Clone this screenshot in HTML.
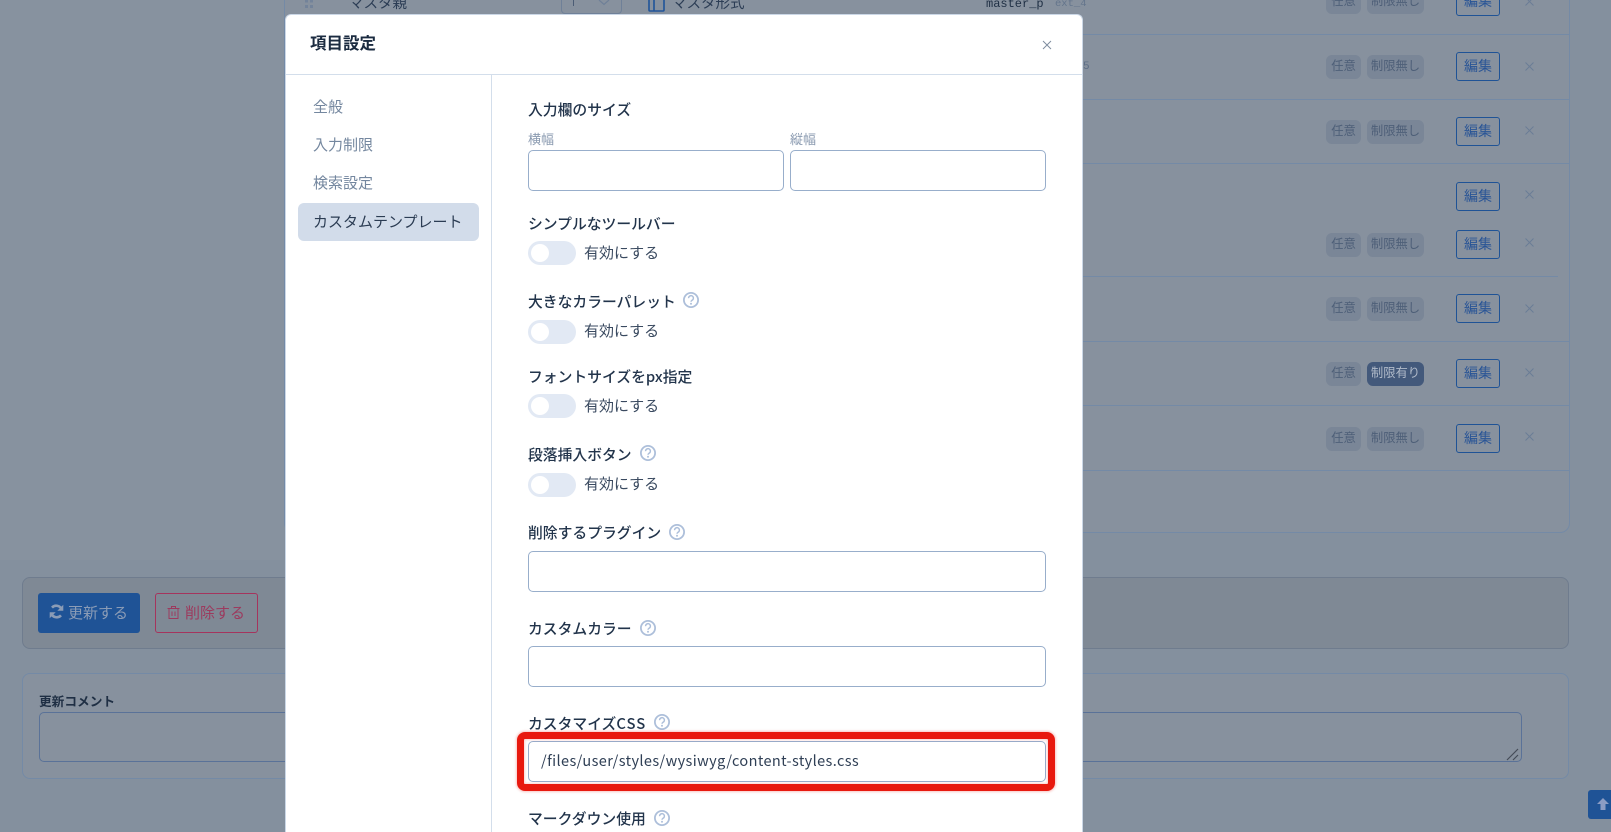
<!DOCTYPE html>
<html lang="ja">
<head>
<meta charset="utf-8">
<title>項目設定</title>
<style>
html,body{margin:0;padding:0;width:1611px;height:832px;overflow:hidden;background:#84909e;}
body{position:relative;font-family:"Liberation Sans","Noto Sans CJK JP",sans-serif;color:#1f2f44;}
*{box-sizing:border-box;}
.a{position:absolute;}
.t{position:absolute;white-space:nowrap;line-height:20px;height:20px;font-family:"Noto Sans CJK JP","Liberation Sans",sans-serif;}
.badge{position:absolute;height:24px;background:#7a8697;border-radius:6px;color:#4e5f78;font-size:12.3px;line-height:21px;text-align:center;font-family:"Noto Sans CJK JP",sans-serif;}
.b1{left:1326px;width:35px;}
.b2{left:1367px;width:57px;}
.b3{left:1367px;width:57px;background:#43597b;color:#b0bac9;}
.edit{position:absolute;left:1456px;width:44px;height:29px;border:1px solid #1f5396;border-radius:3px;color:#2a5596;font-size:14px;line-height:26px;text-align:center;font-family:"Noto Sans CJK JP",sans-serif;}
.x{position:absolute;left:1525px;width:9px;height:9px;}
.line{position:absolute;left:284px;width:1285px;height:1px;background:#748aa6;}
.lab{font-size:14.8px;font-weight:500;color:#22344b;left:528px;}
.nav{font-size:15px;left:313px;color:#74879f;}
.sw{position:absolute;left:528px;width:48px;height:24px;border-radius:12px;background:#e2e9f4;}
.sw:after{content:"";position:absolute;left:3px;top:3px;width:18px;height:18px;border-radius:50%;background:#fff;}
.swt{left:584px;font-size:15px;color:#3a4a60;}
.inp{position:absolute;background:#fff;border:1px solid #98aecb;border-radius:5px;height:41px;}
.help{position:absolute;width:16px;height:16px;}
</style>
</head>
<body>
<!-- background card -->
<div class="a" style="left:284px;top:-20px;width:1286px;height:553px;background:#87919e;border:1px solid #748aa6;border-radius:10px;"></div>
<div class="a" style="left:0;top:0;width:284px;height:560px;background:#87929f;"></div>

<div class="line" style="top:34px"></div>
<div class="line" style="top:99px"></div>
<div class="line" style="top:163px"></div>
<div class="line" style="top:276px;width:1274px"></div>
<div class="line" style="top:341px"></div>
<div class="line" style="top:405px"></div>
<div class="line" style="top:470px"></div>

<!-- row 1 content peeking above modal -->
<svg class="a" style="left:305px;top:0" width="9" height="9"><g fill="#73839a"><rect x="0" y="0" width="3" height="2.5"/><rect x="5" y="0" width="3" height="2.5"/><rect x="0" y="5" width="3" height="3"/><rect x="5" y="5" width="3" height="3"/></g></svg>
<div class="t" style="left:349px;top:-7px;font-size:14.5px;color:#2c3d55">マスタ親</div>
<div class="a" style="left:561px;top:-15px;width:61px;height:29px;border:1px solid #6f8098;border-radius:4px"></div>
<div class="a" style="left:573px;top:0;width:1px;height:6px;background:#4b5c75"></div>
<svg class="a" style="left:598px;top:0" width="12" height="6"><path d="M1 0L6 4.5L11 0" fill="none" stroke="#6f8098" stroke-width="1.2"/></svg>
<svg class="a" style="left:648px;top:0" width="17" height="12"><path d="M1 0V10a1 1 0 0 0 1 1H15a1 1 0 0 0 1-1V0M6 0V11" fill="none" stroke="#20549a" stroke-width="1.6"/></svg>
<div class="t" style="left:672px;top:-7px;font-size:14.5px;color:#2c3d55">マスタ形式</div>
<div class="t" style="left:986px;top:-6px;font-family:'Liberation Mono',monospace;font-size:12px;color:#1f2f44">master_p</div>
<div class="t" style="left:1055px;top:-6px;font-family:'Liberation Mono',monospace;font-size:10.5px;color:#64758c">ext_4</div>
<div class="t" style="left:1083px;top:57px;font-family:'Liberation Mono',monospace;font-size:11px;color:#5d6e86">5</div>

<!-- rows -->
<div class="badge b1" style="top:-10px">任意</div><div class="badge b2" style="top:-10px">制限無し</div><div class="edit" style="top:-13px">編集</div>
<svg class="x" style="top:-3px" viewBox="0 0 9 9"><path d="M.5.5l8 8M8.5.5l-8 8" stroke="#6b7d96" stroke-width="1"/></svg>

<div class="badge b1" style="top:55px">任意</div><div class="badge b2" style="top:55px">制限無し</div><div class="edit" style="top:52px">編集</div>
<svg class="x" style="top:62px" viewBox="0 0 9 9"><path d="M.5.5l8 8M8.5.5l-8 8" stroke="#6b7d96" stroke-width="1"/></svg>

<div class="badge b1" style="top:120px">任意</div><div class="badge b2" style="top:120px">制限無し</div><div class="edit" style="top:117px">編集</div>
<svg class="x" style="top:126px" viewBox="0 0 9 9"><path d="M.5.5l8 8M8.5.5l-8 8" stroke="#6b7d96" stroke-width="1"/></svg>

<div class="edit" style="top:182px">編集</div>
<svg class="x" style="top:190px" viewBox="0 0 9 9"><path d="M.5.5l8 8M8.5.5l-8 8" stroke="#6b7d96" stroke-width="1"/></svg>

<div class="badge b1" style="top:233px">任意</div><div class="badge b2" style="top:233px">制限無し</div><div class="edit" style="top:230px">編集</div>
<svg class="x" style="top:238px" viewBox="0 0 9 9"><path d="M.5.5l8 8M8.5.5l-8 8" stroke="#6b7d96" stroke-width="1"/></svg>

<div class="badge b1" style="top:297px">任意</div><div class="badge b2" style="top:297px">制限無し</div><div class="edit" style="top:294px">編集</div>
<svg class="x" style="top:304px" viewBox="0 0 9 9"><path d="M.5.5l8 8M8.5.5l-8 8" stroke="#6b7d96" stroke-width="1"/></svg>

<div class="badge b1" style="top:362px">任意</div><div class="badge b3" style="top:362px">制限有り</div><div class="edit" style="top:359px">編集</div>
<svg class="x" style="top:368px" viewBox="0 0 9 9"><path d="M.5.5l8 8M8.5.5l-8 8" stroke="#6b7d96" stroke-width="1"/></svg>

<div class="badge b1" style="top:427px">任意</div><div class="badge b2" style="top:427px">制限無し</div><div class="edit" style="top:424px">編集</div>
<svg class="x" style="top:432px" viewBox="0 0 9 9"><path d="M.5.5l8 8M8.5.5l-8 8" stroke="#6b7d96" stroke-width="1"/></svg>

<!-- action panel -->
<div class="a" style="left:22px;top:577px;width:1547px;height:72px;background:#7f8995;border:1px solid #6f7c8e;border-radius:8px;"></div>
<div class="a" style="left:38px;top:593px;width:102px;height:40px;background:#1f5396;border-radius:3px;"></div>
<svg class="a" style="left:49px;top:604px" width="15" height="15" viewBox="0 0 15 15"><path d="M12.8 5.800A5.800 5.800 0 0 0 3 3.600M2.200 9.200A5.800 5.800 0 0 0 12 11.400" fill="none" stroke="#8b9cb6" stroke-width="2.600"/><path d="M14.300 .8v6H8.300zM.7 14.200V8.200H6.700z" fill="#8b9cb6"/></svg>
<div class="t" style="left:68px;top:603px;font-size:15px;color:#8b9cb6">更新する</div>
<div class="a" style="left:155px;top:593px;width:103px;height:40px;border:1px solid #a5345d;border-radius:3px;"></div>
<svg class="a" style="left:167px;top:605px" width="13" height="15" viewBox="0 0 13 15"><path d="M.5 3.500H12.500M4.500 3.500V1.500H8.500V3.500M2 3.500V13.500H11V3.500M5 6.500V11M8 6.500V11" fill="none" stroke="#9c3a5e" stroke-width="1"/></svg>
<div class="t" style="left:185px;top:603px;font-size:15px;color:#9c3a5e">削除する</div>

<!-- comment panel -->
<div class="a" style="left:22px;top:673px;width:1547px;height:106px;background:#87919e;border:1px solid #748aa6;border-radius:8px;"></div>
<div class="t" style="left:39px;top:691px;font-size:12.7px;font-weight:700;color:#1f2f44">更新コメント</div>
<div class="a" style="left:39px;top:712px;width:1483px;height:50px;border:1px solid #5a7298;border-radius:5px;"></div>
<svg class="a" style="left:1506px;top:747px" width="14" height="14"><path d="M1 13L12 2M7 13L12 8" stroke="#444c58" stroke-width="1.2" fill="none"/></svg>

<!-- scroll top -->
<div class="a" style="left:1588px;top:790px;width:30px;height:29px;background:#1f5396;border-radius:3px;"></div>
<svg class="a" style="left:1596px;top:797px" width="14" height="14" viewBox="0 0 14 14"><path d="M7 1L13 7H9.500V13H4.500V7H1z" fill="#8b9cc4"/></svg>

<!-- modal -->
<div class="a" style="left:285px;top:14px;width:798px;height:830px;background:#fff;border:1px solid #cbd7e6;border-bottom:0;border-radius:6px 6px 0 0;"></div>
<div class="a" style="left:286px;top:74px;width:796px;height:1px;background:#d3deeb"></div>
<div class="a" style="left:491px;top:75px;width:1px;height:757px;background:#d3deeb"></div>
<div class="t" style="left:310px;top:32px;font-size:16.5px;font-weight:700;color:#1b2b40">項目設定</div>
<svg class="a" style="left:1042px;top:40px" width="10" height="10" viewBox="0 0 10 10"><path d="M1 1l8 8M9 1l-8 8" stroke="#7f8da0" stroke-width="1"/></svg>

<div class="a" style="left:298px;top:203px;width:181px;height:38px;background:#d2dcea;border-radius:6px"></div>
<div class="t nav" style="top:97px">全般</div>
<div class="t nav" style="top:135px">入力制限</div>
<div class="t nav" style="top:173px">検索設定</div>
<div class="t nav" style="top:212px;color:#2b3c53">カスタムテンプレート</div>

<div class="t lab" style="top:100px">入力欄のサイズ</div>
<div class="t" style="left:528px;top:129px;font-size:13px;color:#8a9ab0">横幅</div>
<div class="t" style="left:790px;top:129px;font-size:13px;color:#8a9ab0">縦幅</div>
<div class="inp" style="left:528px;top:150px;width:256px"></div>
<div class="inp" style="left:790px;top:150px;width:256px"></div>

<div class="t lab" style="top:214px">シンプルなツールバー</div>
<div class="sw" style="top:241px"></div>
<div class="t swt" style="top:243px">有効にする</div>

<div class="t lab" style="top:292px">大きなカラーパレット</div>
<svg class="help" style="left:683px;top:292px" viewBox="0 0 16 16"><circle cx="8" cy="8" r="7.1" fill="none" stroke="#adbfda" stroke-width="1.8"/><path d="M5.600 6.200a2.400 2.400 0 1 1 3.500 2c-.8.500-1.100.9-1.100 1.600" fill="none" stroke="#adbfda" stroke-width="1.500"/><circle cx="8" cy="11.800" r="1" fill="#adbfda"/></svg>
<div class="sw" style="top:320px"></div>
<div class="t swt" style="top:321px">有効にする</div>

<div class="t lab" style="top:367px">フォントサイズをpx指定</div>
<div class="sw" style="top:394px"></div>
<div class="t swt" style="top:396px">有効にする</div>

<div class="t lab" style="top:445px">段落挿入ボタン</div>
<svg class="help" style="left:640px;top:445px" viewBox="0 0 16 16"><circle cx="8" cy="8" r="7.1" fill="none" stroke="#adbfda" stroke-width="1.8"/><path d="M5.600 6.200a2.400 2.400 0 1 1 3.500 2c-.8.500-1.100.9-1.100 1.600" fill="none" stroke="#adbfda" stroke-width="1.500"/><circle cx="8" cy="11.800" r="1" fill="#adbfda"/></svg>
<div class="sw" style="top:473px"></div>
<div class="t swt" style="top:474px">有効にする</div>

<div class="t lab" style="top:523px">削除するプラグイン</div>
<svg class="help" style="left:669px;top:524px" viewBox="0 0 16 16"><circle cx="8" cy="8" r="7.1" fill="none" stroke="#adbfda" stroke-width="1.8"/><path d="M5.600 6.200a2.400 2.400 0 1 1 3.500 2c-.8.500-1.100.9-1.100 1.600" fill="none" stroke="#adbfda" stroke-width="1.500"/><circle cx="8" cy="11.800" r="1" fill="#adbfda"/></svg>
<div class="inp" style="left:528px;top:551px;width:518px"></div>

<div class="t lab" style="top:619px">カスタムカラー</div>
<svg class="help" style="left:640px;top:620px" viewBox="0 0 16 16"><circle cx="8" cy="8" r="7.1" fill="none" stroke="#adbfda" stroke-width="1.8"/><path d="M5.600 6.200a2.400 2.400 0 1 1 3.500 2c-.8.500-1.100.9-1.100 1.600" fill="none" stroke="#adbfda" stroke-width="1.500"/><circle cx="8" cy="11.800" r="1" fill="#adbfda"/></svg>
<div class="inp" style="left:528px;top:646px;width:518px"></div>

<div class="t lab" style="top:714px">カスタマイズ<span style="letter-spacing:1px">CSS</span></div>
<svg class="help" style="left:654px;top:714px" viewBox="0 0 16 16"><circle cx="8" cy="8" r="7.1" fill="none" stroke="#adbfda" stroke-width="1.8"/><path d="M5.600 6.200a2.400 2.400 0 1 1 3.500 2c-.8.500-1.100.9-1.100 1.600" fill="none" stroke="#adbfda" stroke-width="1.500"/><circle cx="8" cy="11.800" r="1" fill="#adbfda"/></svg>
<div class="inp" style="left:528px;top:741px;width:518px"></div>
<div class="t" style="left:541px;top:751px;font-size:14.5px;letter-spacing:.39px;color:#2f3f55">/files/user/styles/wysiwyg/content-styles.css</div>
<div class="a" style="left:517px;top:732px;width:538px;height:59px;border:7px solid #e8190f;border-radius:8px;box-shadow:0 0 2px 1px rgba(232,25,15,.25),inset 0 0 2px 1px rgba(232,25,15,.2);"></div>

<div class="t lab" style="top:809px">マークダウン使用</div>
<svg class="help" style="left:654px;top:810px" viewBox="0 0 16 16"><circle cx="8" cy="8" r="7.1" fill="none" stroke="#adbfda" stroke-width="1.8"/><path d="M5.600 6.200a2.400 2.400 0 1 1 3.500 2c-.8.500-1.100.9-1.100 1.600" fill="none" stroke="#adbfda" stroke-width="1.500"/><circle cx="8" cy="11.800" r="1" fill="#adbfda"/></svg>
</body>
</html>
